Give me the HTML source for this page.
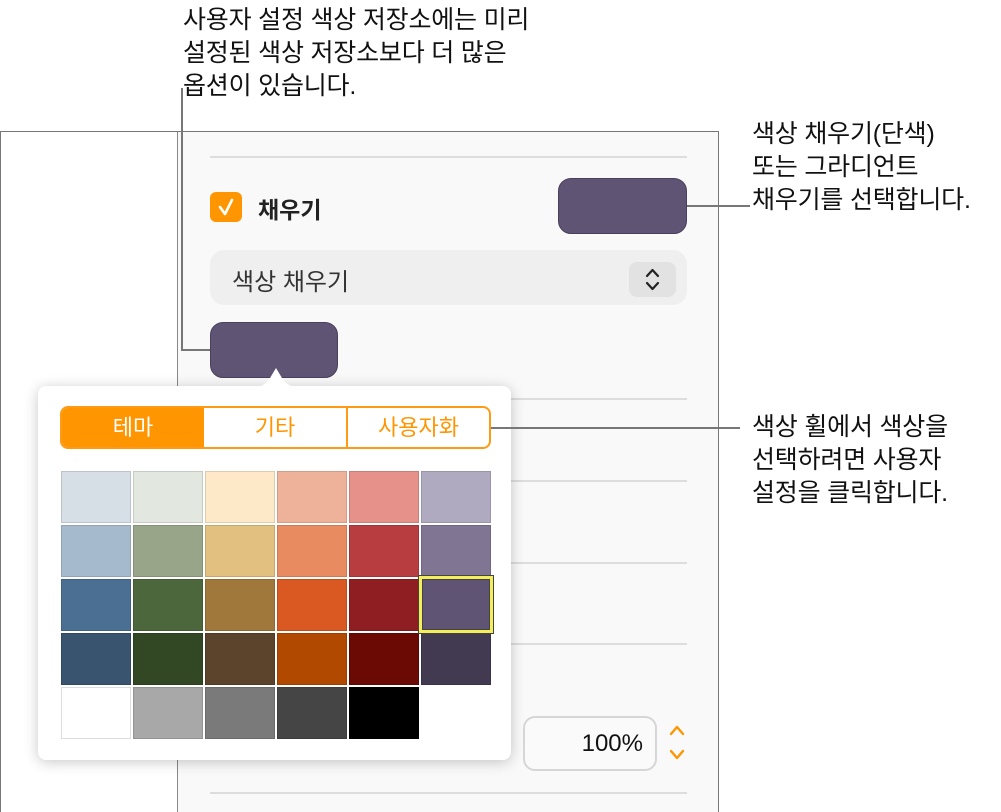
<!DOCTYPE html>
<html style="overflow:hidden;height:812px"><head><meta charset="utf-8"><style>
body{margin:0;width:1001px;height:812px;background:#fff;position:relative;overflow:hidden;font-family:"Liberation Sans","Noto Sans CJK KR",sans-serif;}
.a{position:absolute}
.t{position:absolute;font-size:25px;line-height:33px;color:#111;white-space:nowrap;letter-spacing:-0.2px}
.sep{position:absolute;left:210px;width:477px;height:2px;background:#ddd}
.c{position:absolute;width:70px;height:52px;box-sizing:border-box;border:1px solid rgba(0,0,0,.12)}
</style></head><body>
<div class="a" style="left:0;top:131px;width:719px;height:681px;border:1px solid #777;border-bottom:none;box-sizing:border-box;background:#fff"></div>
<div class="a" style="left:177px;top:132px;width:540px;height:680px;background:#f9f9f9;border-left:1px solid #888"></div>
<div class="sep" style="top:156px"></div>
<div class="sep" style="top:398px"></div>
<div class="sep" style="top:480px"></div>
<div class="sep" style="top:562px"></div>
<div class="sep" style="top:643px"></div>
<div class="sep" style="top:792px"></div>
<div class="a" style="left:210px;top:192px;width:32px;height:30px;background:#ff9500;border-radius:6px"></div>
<svg class="a" style="left:210px;top:192px" width="32" height="30"><path d="M10 15 L15 22 L22 8" stroke="#fff" stroke-width="2.6" fill="none" stroke-linecap="round" stroke-linejoin="round"/></svg>
<div class="a" style="left:258px;top:191px;font-size:23px;font-weight:bold;color:#222">채우기</div>
<div class="a" style="left:558px;top:178px;width:129px;height:56px;background:#5f5474;border-radius:13px;box-sizing:border-box;border:1px solid #4a405c"></div>
<div class="a" style="left:210px;top:250px;width:477px;height:55px;background:#efefef;border-radius:14px"></div>
<div class="a" style="left:232px;top:262px;font-size:24px;color:#333">색상 채우기</div>
<div class="a" style="left:629px;top:262px;width:47px;height:35px;background:#e2e2e2;border-radius:8px"></div>
<svg class="a" style="left:629px;top:262px" width="47" height="35"><path d="M18 14 L23.5 8 L29 14 M18 21 L23.5 27 L29 21" stroke="#222" stroke-width="2.2" fill="none" stroke-linecap="round" stroke-linejoin="round"/></svg>
<div class="a" style="left:181px;top:88px;width:2px;height:263px;background:#777"></div>
<div class="a" style="left:181px;top:349px;width:30px;height:2px;background:#777"></div>
<div class="a" style="left:210px;top:322px;width:128px;height:56px;background:#5f5474;border-radius:13px;box-sizing:border-box;border:1px solid #4a405c"></div>
<div class="a" style="left:687px;top:205px;width:63px;height:2px;background:#777"></div>
<div class="a" style="left:38px;top:386px;width:473px;height:374px;background:#fff;border-radius:8px;box-shadow:0 2px 14px rgba(0,0,0,.22)"></div>
<svg class="a" style="left:250px;top:360px" width="52" height="28"><path d="M0 28 Q14 28 20 18 L26 8 L32 18 Q38 28 52 28 Z" fill="#fff"/></svg>
<div class="a" style="left:60px;top:406px;width:431px;height:43px;border:2px solid #ff9a14;border-radius:8px;box-sizing:border-box;background:#fff;overflow:hidden;display:flex;font-size:22px;color:#ff9500">
<div style="width:142px;background:#ff9500;color:#fff;text-align:center;line-height:39px">테마</div>
<div style="width:142px;text-align:center;line-height:39px;border-right:2px solid #ff9a14">기타</div>
<div style="flex:1;text-align:center;line-height:39px">사용자화</div></div>
<div class="a" style="left:491px;top:427px;width:249px;height:2px;background:#777"></div>
<div class="c" style="left:61px;top:471px;background:#d7dfe6"></div>
<div class="c" style="left:133px;top:471px;background:#e2e7df"></div>
<div class="c" style="left:205px;top:471px;background:#fde9c8"></div>
<div class="c" style="left:277px;top:471px;background:#eeb29b"></div>
<div class="c" style="left:349px;top:471px;background:#e6918a"></div>
<div class="c" style="left:421px;top:471px;background:#b0aac1"></div>
<div class="c" style="left:61px;top:525px;background:#a6bace"></div>
<div class="c" style="left:133px;top:525px;background:#98a589"></div>
<div class="c" style="left:205px;top:525px;background:#e2c07f"></div>
<div class="c" style="left:277px;top:525px;background:#e98b61"></div>
<div class="c" style="left:349px;top:525px;background:#b73d40"></div>
<div class="c" style="left:421px;top:525px;background:#817594"></div>
<div class="c" style="left:61px;top:579px;background:#4a6f93"></div>
<div class="c" style="left:133px;top:579px;background:#4d673d"></div>
<div class="c" style="left:205px;top:579px;background:#a0783b"></div>
<div class="c" style="left:277px;top:579px;background:#da5922"></div>
<div class="c" style="left:349px;top:579px;background:#8f1e22"></div>
<div class="c" style="left:61px;top:633px;background:#39546f"></div>
<div class="c" style="left:133px;top:633px;background:#324824"></div>
<div class="c" style="left:205px;top:633px;background:#5b432c"></div>
<div class="c" style="left:277px;top:633px;background:#b24901"></div>
<div class="c" style="left:349px;top:633px;background:#6b0a04"></div>
<div class="c" style="left:421px;top:633px;background:#423a51"></div>
<div class="c" style="left:61px;top:687px;background:#fff;border-color:#ddd"></div>
<div class="c" style="left:133px;top:687px;background:#a8a8a8"></div>
<div class="c" style="left:205px;top:687px;background:#7a7a7a"></div>
<div class="c" style="left:277px;top:687px;background:#454545"></div>
<div class="c" style="left:349px;top:687px;background:#000"></div>
<div class="a" style="left:418px;top:575px;width:76px;height:59px;background:#5f5474;box-sizing:border-box;box-shadow:inset 0 0 0 1px #444,inset 0 0 0 4px #f4ee5a,inset 0 0 0 5px #444"></div>
<div class="a" style="left:523px;top:716px;width:134px;height:55px;border:2px solid #d6d6d6;border-radius:12px;box-sizing:border-box;background:#fafafa;text-align:right;padding-right:12px;font-size:24px;line-height:51px;color:#111">100%</div>
<svg class="a" style="left:664px;top:720px" width="26" height="46"><path d="M7 14 L13 7 L19 14 M7 31 L13 38 L19 31" stroke="#ff9500" stroke-width="2.4" fill="none" stroke-linecap="round" stroke-linejoin="round"/></svg>
<div class="t" style="left:183px;top:4px">사용자 설정 색상 저장소에는 미리<br>설정된 색상 저장소보다 더 많은<br>옵션이 있습니다.</div>
<div class="t" style="left:752px;top:118px">색상 채우기(단색)<br>또는 그라디언트<br>채우기를 선택합니다.</div>
<div class="t" style="left:752px;top:411px">색상 휠에서 색상을<br>선택하려면 사용자<br>설정을 클릭합니다.</div>
</body></html>
